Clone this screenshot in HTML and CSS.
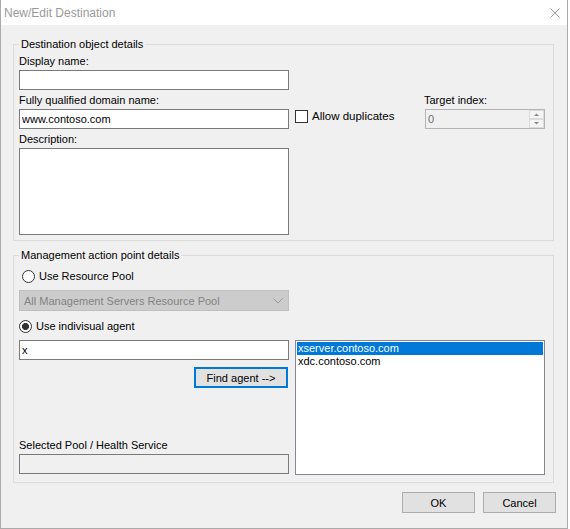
FILE: index.html
```html
<!DOCTYPE html>
<html lang="en">
  <head>
    <meta charset="UTF-8" />
    <title>New/Edit Destination</title>
    <link rel="stylesheet" href="styles.css">
  </head>
  <body>
    <div class="window">
      <div class="titlebar">
        <span class="title">New/Edit Destination</span>
        <svg class="close" width="10" height="10" viewBox="0 0 10 10">
          <path d="M0.5 0.5 L9.5 9.5 M9.5 0.5 L0.5 9.5" stroke="#999" stroke-width="1" fill="none" />
        </svg>
      </div>

      <div class="client">
        <div class="group group-object">
          <div class="legend">Destination object details</div>
          <div class="object-grid">
            <label class="lbl c1">Display name:</label>
            <input class="field c1" type="text">
            <label class="lbl c1">Fully qualified domain name:</label>
            <label class="lbl c3 target-lbl">Target index:</label>
            <input class="field c1" type="text" value="www.contoso.com">
            <label class="check c2"><span class="box"></span>Allow duplicates</label>
            <div class="spin c3">
              <span>0</span>
              <svg class="spin-btns" width="15" height="18" viewBox="0 0 15 18">
                <rect x="0.5" y="0.5" width="14" height="8" fill="#f4f4f4" stroke="#dcdcdc" />
                <rect x="0.5" y="9.5" width="14" height="8" fill="#f4f4f4" stroke="#dcdcdc" />
                <path d="M5 6 L10 6 L7.5 3.5 Z" fill="#888" />
                <path d="M5 12 L10 12 L7.5 14.5 Z" fill="#888" />
              </svg>
            </div>
            <label class="lbl c1">Description:</label>
            <textarea class="field memo c1"></textarea>
          </div>
        </div>

        <div class="group group-map">
          <div class="legend">Management action point details</div>
          <label class="radio first"><span class="dot"></span>Use Resource Pool</label>
          <div class="combo">
            <span>All Management Servers Resource Pool</span>
            <svg width="10" height="6" viewBox="0 0 10 6">
              <path d="M0.5 0.5 L5 5 L9.5 0.5" stroke="#999" stroke-width="1" fill="none" />
            </svg>
          </div>
          <label class="radio second"><span class="dot on"></span>Use indivisual agent</label>

          <div class="agent-row">
            <div class="agent-left">
              <input class="field" type="text" value="x">
              <button class="btn find">Find agent --&gt;</button>
              <label class="lbl pool-lbl">Selected Pool / Health Service</label>
              <div class="field readonly"></div>
            </div>
            <div class="listbox">
              <div class="item selected">xserver.contoso.com</div>
              <div class="item">xdc.contoso.com</div>
            </div>
          </div>
        </div>
      </div>

      <div class="footer">
        <button class="btn">OK</button>
        <button class="btn">Cancel</button>
      </div>
    </div>
  </body>
</html>
```

FILE: styles.css
```css
* {
  box-sizing: border-box;
}
body {
  margin: 0;
  background: #ffffff;
  font-family: "Liberation Sans", Arial, sans-serif;
  font-size: 11px;
  color: #000;
}
.window {
  width: 568px;
  height: 529px;
  background: #f0f0f0;
  border: 1px solid #aaaaaa;
  border-top: none;
  display: flex;
  flex-direction: column;
}
.titlebar {
  height: 25px;
  flex: none;
  background: #ffffff;
  display: flex;
  align-items: center;
  padding: 0 7px 0 3px;
  font-size: 12px;
  color: #999999;
}
.close {
  margin-left: auto;
}
.client {
  padding-left: 12px;
}

/* group boxes */
.group {
  width: 541px;
  border: 1px solid #dcdcdc;
  padding-left: 5px;
}
.group-object {
  margin-top: 19px;
  height: 197px;
}
.group-map {
  margin-top: 14px;
  height: 228px;
}
.legend {
  display: table;
  margin-top: -7px;
  padding: 0 2px;
  line-height: 13px;
  background: #f0f0f0;
}
.lbl {
  display: block;
  line-height: 13px;
  height: 13px;
  white-space: nowrap;
}

/* first group */
.object-grid {
  display: grid;
  grid-template-columns: 270px 136px 120px;
  grid-template-rows: 17px 22px 17px 22px 17px 89px;
}
.object-grid > * {
  align-self: end;
}
.c1 { grid-column: 1; }
.c2 { grid-column: 2; }
.c3 { grid-column: 3; }
.target-lbl {
  margin-left: -1px;
}
.field {
  display: block;
  width: 270px;
  height: 20px;
  margin: 0;
  padding: 0 2px;
  border: 1px solid #7a7a7a;
  background: #ffffff;
  font: inherit;
  color: #000;
  outline: none;
}
.memo {
  height: 87px;
  resize: none;
}
.check {
  align-self: start;
  margin: 3px 0 0 6px;
  display: flex;
  align-items: center;
  gap: 4px;
  line-height: 13px;
  font-size: 11.5px;
}
.box {
  width: 13px;
  height: 13px;
  border: 1px solid #333333;
  background: #ffffff;
}
.spin {
  height: 20px;
  border: 1px solid #b4b4b4;
  background: #f0f0f0;
  color: #6d6d6d;
  display: flex;
  align-items: center;
  padding: 0 0 0 2px;
}
.spin-btns {
  margin-left: auto;
  margin-right: 0;
}

/* second group */
.radio {
  display: flex;
  align-items: center;
  gap: 4px;
  height: 13px;
  line-height: 13px;
}
.radio.first {
  margin-top: 8px;
  margin-left: 3px;
}
.radio.second {
  margin-top: 9px;
}
.dot {
  width: 13px;
  height: 13px;
  border: 1px solid #333333;
  border-radius: 50%;
  background: #ffffff;
}
.dot.on {
  background: radial-gradient(circle, #333333 3.2px, #ffffff 3.8px);
}
.combo {
  margin-top: 7px;
  width: 270px;
  height: 21px;
  border: 1px solid #bfbfbf;
  background: #cccccc;
  color: #838383;
  display: flex;
  align-items: center;
  padding: 0 5px 0 4px;
}
.combo svg {
  margin-left: auto;
}
.agent-row {
  margin-top: 7px;
  display: flex;
  gap: 6px;
}
.agent-left {
  width: 270px;
  height: 134px;
  display: flex;
  flex-direction: column;
}
.pool-lbl {
  margin-top: auto;
}
.readonly {
  margin-top: 2px;
  background: #f0f0f0;
}
.listbox {
  width: 250px;
  height: 135px;
  border: 1px solid #828790;
  background: #ffffff;
  padding: 1px;
}
.item {
  line-height: 13px;
  padding-left: 1px;
}
.item.selected {
  background: #0078d7;
  color: #ffffff;
}

/* buttons */
.btn {
  width: 73px;
  height: 21px;
  margin: 0;
  padding: 0;
  border: 1px solid #adadad;
  background: #e1e1e1;
  font: inherit;
  color: #000;
}
.find {
  align-self: flex-end;
  margin: 7px 1px 0 0;
  width: 94px;
  border: 2px solid #0078d7;
}
.footer {
  margin-top: 9px;
  display: flex;
  justify-content: flex-end;
  gap: 8px;
  padding-right: 11px;
}
```
